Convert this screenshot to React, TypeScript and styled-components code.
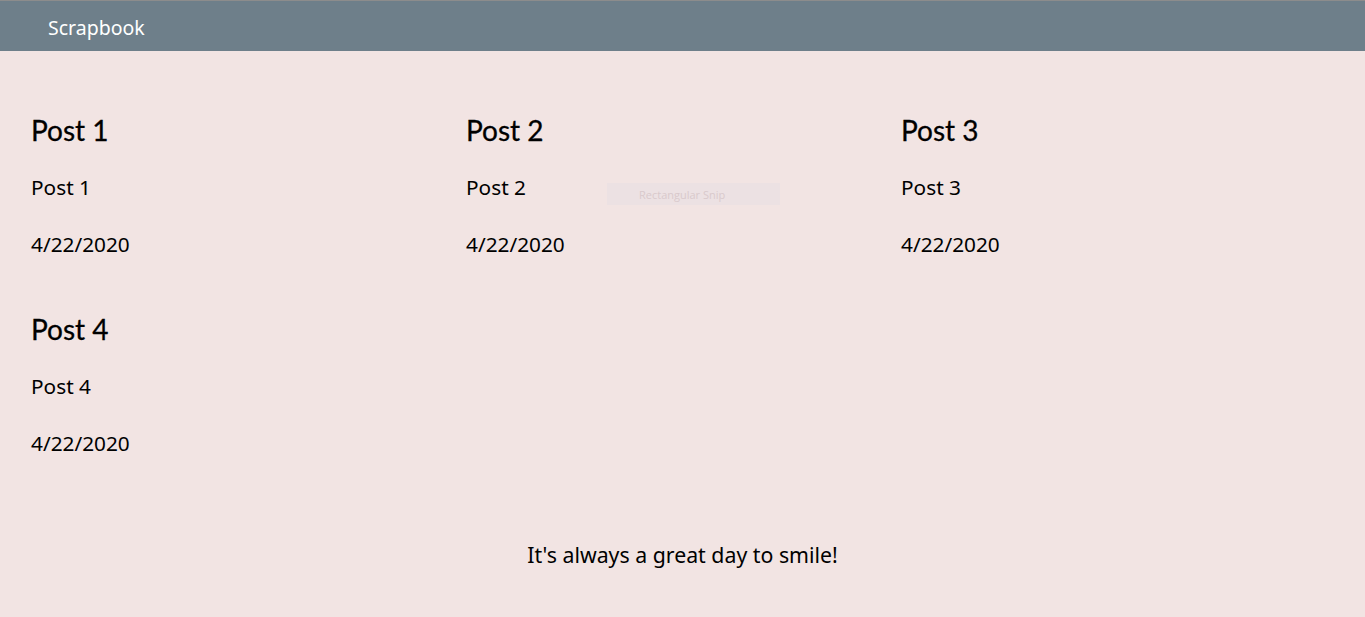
import React from "react";
import styled, { createGlobalStyle } from "styled-components";

const Global = createGlobalStyle`
  html, body { margin: 0; padding: 0; background: #f2e4e3; }
  body { font-family: "Noto Sans", "Open Sans", sans-serif; color: #000; }
  * { box-sizing: border-box; }
`;

const Page = styled.div`
  min-height: 617px;
  background: #f2e4e3;
  position: relative;
`;

const Header = styled.header`
  height: 51px;
  background: #6e7f8a;
  border-top: 1px solid #8c8c8c;
  display: flex;
  align-items: center;
  padding-left: 48px;
`;

const Brand = styled.span`
  color: #fff;
  font-family: "Noto Sans", sans-serif;
  font-size: 19.5px;
  line-height: 1;
  padding-top: 4px;
`;

const Grid = styled.main`
  display: grid;
  grid-template-columns: repeat(3, 435px);
  row-gap: 53px;
  padding: 61px 0 0 31px;
`;

const Card = styled.article`
  display: flex;
  flex-direction: column;
`;

const Title = styled.h2`
  margin: 0;
  font-family: "Lato", sans-serif;
  font-weight: 400;
  font-size: 28px;
  line-height: 36px;
  -webkit-text-stroke: 0.3px #000;
`;

const Text = styled.p<{ $gap: number }>`
  margin: ${(p) => p.$gap}px 0 0;
  font-size: 20.8px;
  line-height: 28px;
`;

const Footer = styled.footer`
  text-align: center;
  font-size: 21.3px;
  line-height: 28px;
  padding-top: 84px;
`;

const Snip = styled.div`
  position: absolute;
  left: 607px;
  top: 183px;
  width: 173px;
  height: 22px;
  background: #ece1e3;
  color: #d9c9cc;
  font-family: "Open Sans", sans-serif;
  font-size: 11px;
  display: flex;
  align-items: center;
  padding-left: 32px;
`;

const posts = [1, 2, 3, 4];

export default function App() {
  return (
    <Page>
      <Global />
      <Header>
        <Brand>Scrapbook</Brand>
      </Header>
      <Grid>
        {posts.map((n) => (
          <Card key={n}>
            <Title>Post {n}</Title>
            <Text $gap={25}>Post {n}</Text>
            <Text $gap={29}>4/22/2020</Text>
          </Card>
        ))}
      </Grid>
      <Footer>It's always a great day to smile!</Footer>
      <Snip>Rectangular Snip</Snip>
    </Page>
  );
}
